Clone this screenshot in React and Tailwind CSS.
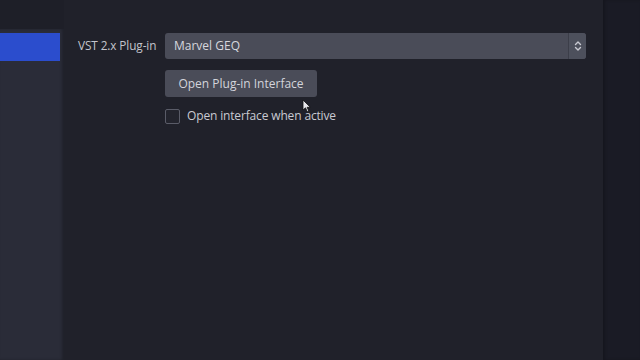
import React from "react";

export default function App() {
  return (
    <div
      className="flex w-[640px] h-[360px] overflow-hidden bg-[#20212a] text-[#c9cad2]"
      style={{ fontFamily: '"Open Sans", "Noto Sans", sans-serif' }}
    >
      <div className="flex flex-col w-[64px] shrink-0">
        <div className="h-[29px] bg-[#1e1f28]" />
        <div className="flex-1 bg-[#2a2c38] pt-[4px] pr-[4px] shadow-[inset_-2px_0_3px_rgba(0,0,0,0.25)]">
          <div className="h-[28px] bg-[#2b4dcd]" />
        </div>
      </div>
      <div className="flex-1 pt-[33px] pl-[14px] pr-[17px]">
        <div className="flex items-center h-[26px]">
          <div className="w-[87px] shrink-0 text-[11.8px] tracking-[-0.1px] text-[#c3c4cc] leading-none">VST 2.x Plug-in</div>
          <div className="flex-1 flex h-[26px] rounded-[3px] bg-[#4a4c58] overflow-hidden">
            <div className="flex-1 flex items-center pl-[9px] text-[12px] text-[#d6d7de]">Marvel GEQ</div>
            <div className="w-[18px] border-l border-[#3c3e49] flex items-center justify-center bg-[#4d505c]">
              <svg width="8" height="12" viewBox="0 0 8 12" fill="none" stroke="#c9cad2" strokeWidth="1.4" strokeLinecap="round" strokeLinejoin="round">
                <path d="M1.5 4.5 L4 2 L6.5 4.5" />
                <path d="M1.5 7.5 L4 10 L6.5 7.5" />
              </svg>
            </div>
          </div>
        </div>
        <div className="pl-[87px] pt-[11px]">
          <div className="relative w-[152px] h-[27px] rounded-[3px] bg-[#4a4c58] flex items-center justify-center text-[12px] text-[#d3d4db]">
            Open Plug-in Interface
            <svg className="absolute left-[137px] top-[29px]" width="9" height="14" viewBox="0 0 9 14">
              <path d="M1 1 L1 11 L3.5 8.8 L5.3 12.8 L6.8 12.1 L5.1 8.3 L8.3 8.3 Z" fill="#e8e8ec" stroke="#111" strokeWidth="0.8" />
            </svg>
          </div>
          <div className="flex items-center pt-[10px] gap-[7px]">
            <div className="w-[15px] h-[15px] rounded-[2px] border border-[#5a5c68] bg-[#23242d]" />
            <div className="text-[12px] tracking-[-0.15px] text-[#c9cad2]">Open interface when active</div>
          </div>
        </div>
      </div>
      <div className="w-[37px] shrink-0 bg-[#1a1b25] shadow-[inset_2px_0_3px_rgba(0,0,0,0.2)]" />
    </div>
  );
}
